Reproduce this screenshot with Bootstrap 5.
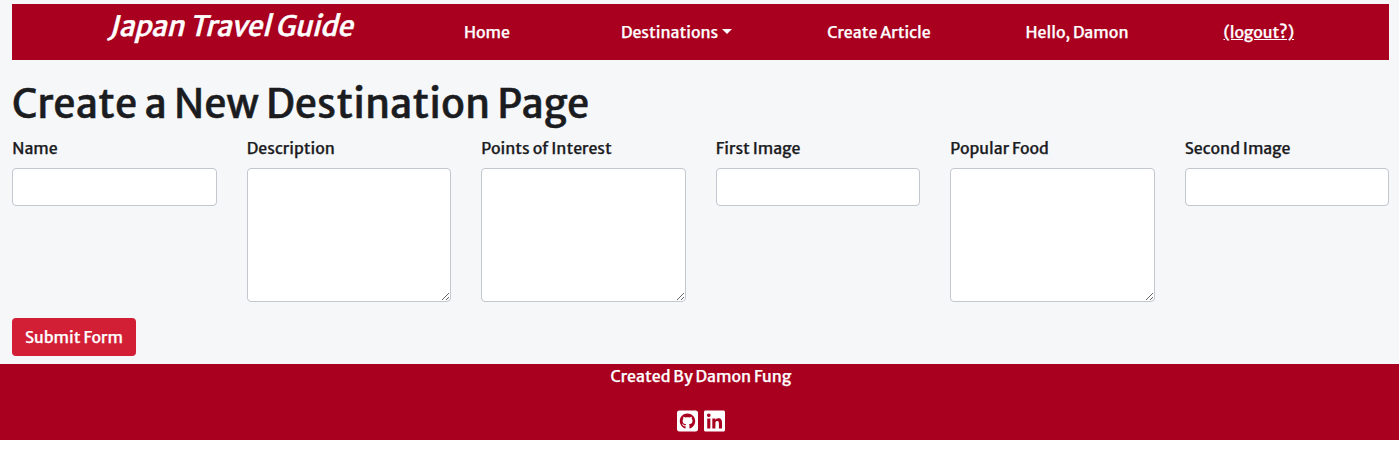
<!DOCTYPE html>
<html lang="en">
<head>
<meta charset="utf-8">
<meta name="viewport" content="width=device-width, initial-scale=1">
<title>Japan Travel Guide</title>
<link href="https://cdn.jsdelivr.net/npm/bootstrap@5.3.0/dist/css/bootstrap.min.css" rel="stylesheet">
<style>
  body { font-family: "Merriweather Sans", "Noto Sans", sans-serif; font-weight: 500; font-size: 16px; line-height: 24px; color: #1b1c1f; background: #fff; -webkit-text-stroke: .25px currentColor; }
  .page-area { background: #f6f7f9; padding: 4px 10px 8px 12px; }
  .site-nav { background: #a90020; height: 56px; padding-left: 2px; -webkit-text-stroke-color: #fff; }
  .site-nav a { color: #fff; white-space: nowrap; }
  .site-nav .nav-link { padding: 0; }
  .site-nav .dropdown-toggle::after { border-width: 5px 5px 0; margin-left: 4px; }
  .site-brand { width: 246px; margin: 0 12px 12px 2px; font-size: 28px; line-height: 34px; transform: skewX(-14deg); text-decoration: none; -webkit-text-stroke-width: .5px; }
  .page-title { font-size: 40px; line-height: 48px; font-weight: 500; margin: 20px 0 7px; -webkit-text-stroke-width: .5px; }
  .field-row { --bs-gutter-x: 30px; margin-left: -14.7px; margin-right: -15.3px; }
  .form-control { border-color: #c3c8cf; border-radius: 4px; height: 38px; }
  .form-label { line-height: 24px; margin-bottom: 8px; padding-top: 1px; display: block; }
  textarea.form-control { height: 134px; }
  .submit-btn { background: #d21f36; color: #fff; font: inherit; line-height: 24px; border-radius: 4px; width: 124px; height: 38px; padding: 6px 0; -webkit-text-stroke: .25px #fff; }
  .site-footer { background: #a90020; height: 76px; color: #fff; -webkit-text-stroke-color: #fff; padding-left: 3px; }
  .social-row { gap: 6px; margin-top: 21px; }
  .social { width: 21px; height: 24px; fill: #fff; display: block; }
</style>
</head>
<body>
<main class="page-area">
  <nav class="site-nav d-flex align-items-center justify-content-evenly">
    <a class="site-brand" href="#">Japan Travel Guide</a>
    <a class="nav-link" href="#">Home</a>
    <div class="dropdown ms-3">
      <a class="nav-link dropdown-toggle" href="#" data-bs-toggle="dropdown">Destinations</a>
    </div>
    <a class="nav-link" href="#">Create Article</a>
    <a class="nav-link" href="#">Hello, Damon</a>
    <a class="nav-link text-decoration-underline" href="#">(logout?)</a>
  </nav>
  <h1 class="page-title">Create a New Destination Page</h1>
  <form>
    <div class="row field-row">
      <div class="col-2"><label class="form-label" for="name">Name</label><input id="name" class="form-control"></div>
      <div class="col-2"><label class="form-label" for="desc">Description</label><textarea id="desc" class="form-control"></textarea></div>
      <div class="col-2"><label class="form-label" for="points">Points of Interest</label><textarea id="points" class="form-control"></textarea></div>
      <div class="col-2"><label class="form-label" for="img1">First Image</label><input id="img1" class="form-control"></div>
      <div class="col-2"><label class="form-label" for="food">Popular Food</label><textarea id="food" class="form-control"></textarea></div>
      <div class="col-2"><label class="form-label" for="img2">Second Image</label><input id="img2" class="form-control"></div>
    </div>
    <button type="button" class="btn submit-btn d-block mt-3">Submit Form</button>
  </form>
</main>
<footer class="site-footer text-center">
  <div>Created By Damon Fung</div>
  <div class="social-row d-flex justify-content-center">
    <a href="#" aria-label="GitHub"><svg class="social" viewBox="0 0 448 512"><path d="M400 32H48C21.500 32 0 53.500 0 80v352c0 26.500 21.500 48 48 48h352c26.500 0 48-21.500 48-48V80c0-26.500-21.500-48-48-48zM277.300 415.700c-8.400 1.500-11.500-3.700-11.500-8 0-5.400.2-33 .2-55.300 0-15.600-5.200-25.500-11.300-30.700 37-4.100 76-9.200 76-73.100 0-18.200-6.500-27.300-17.100-39 1.700-4.300 7.400-22-1.700-45-13.900-4.300-45.700 17.900-45.700 17.900-13.200-3.700-27.500-5.600-41.600-5.600-14.100 0-28.400 1.900-41.600 5.600 0 0-31.800-22.200-45.700-17.900-9.100 22.900-3.500 40.600-1.700 45-10.600 11.700-15.600 20.800-15.600 39 0 63.600 37.300 69 74.300 73.100-4.800 4.300-9.100 11.700-10.600 22.300-9.500 4.300-33.800 11.700-48.300-13.900-9.100-15.800-25.500-17.100-25.500-17.100-16.200-.2-1.100 10.200-1.100 10.200 10.800 5 18.400 24.200 18.400 24.200 9.700 29.700 56.100 19.700 56.100 19.700 0 13.900.2 36.500.2 40.600 0 4.300-3 9.500-11.500 8-66-22.100-112.200-84.900-112.200-158.300 0-91.800 70.200-161.500 162-161.500S388 165.600 388 257.400c.1 73.400-44.700 136.300-110.700 158.300z"/></svg></a>
    <a href="#" aria-label="LinkedIn"><svg class="social" viewBox="0 0 448 512"><path d="M416 32H31.900C14.300 32 0 46.500 0 64.300v383.400C0 465.500 14.300 480 31.900 480H416c17.600 0 32-14.500 32-32.300V64.300c0-17.800-14.400-32.300-32-32.300zM135.400 416H69V202.200h66.500V416zm-33.200-243c-21.300 0-38.500-17.300-38.500-38.500S80.900 96 102.200 96c21.200 0 38.500 17.300 38.500 38.500 0 21.300-17.200 38.500-38.500 38.500zm282.100 243h-66.400V312c0-24.800-.5-56.700-34.500-56.700-34.600 0-39.900 27-39.900 54.900V416h-66.400V202.200h63.700v29.200h.9c8.900-16.800 30.600-34.500 62.900-34.500 67.200 0 79.700 44.300 79.700 101.900V416z"/></svg></a>
  </div>
</footer>
<script src="https://cdn.jsdelivr.net/npm/bootstrap@5.3.0/dist/js/bootstrap.bundle.min.js"></script>
</body>
</html>
